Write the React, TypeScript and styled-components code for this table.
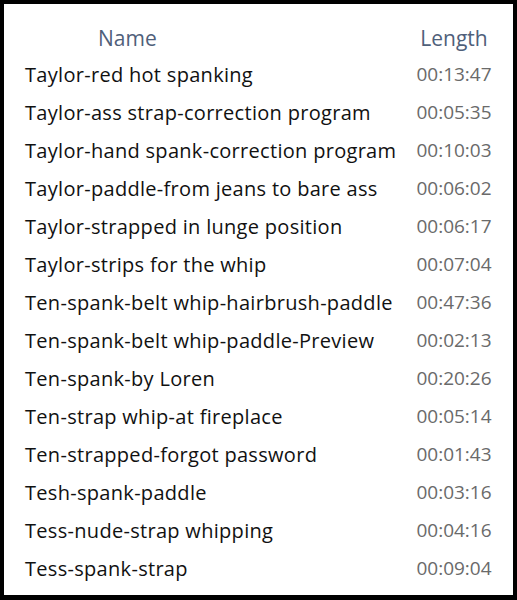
import React from "react";
import styled, { createGlobalStyle } from "styled-components";

const Global = createGlobalStyle`
  html, body { margin: 0; padding: 0; background: #fff; }
  * { box-sizing: border-box; }
`;

const Frame = styled.div`
  width: 517px;
  height: 600px;
  border: 4px solid #000;
  border-bottom-width: 5px;
  background: #fff;
  padding: 16px 19px 0 21px;
  font-family: "Open Sans", "Noto Sans", sans-serif;
`;

const Grid = styled.div`
  display: grid;
  grid-template-columns: 1fr 80px;
  grid-template-rows: 35px;
  grid-auto-rows: 38px;
  align-items: center;
`;

const Head = styled.div<{ $align: "name" | "len" }>`
  height: 35px;
  display: flex;
  align-items: center;
  justify-content: ${(p) => (p.$align === "name" ? "flex-start" : "center")};
  padding-left: ${(p) => (p.$align === "name" ? "73px" : "0")};
  color: #4f607a;
  font-size: 21px;
`;

const NameCell = styled.div`
  color: #111;
  font-size: 20px;
  letter-spacing: 0.3px;
  white-space: nowrap;
`;

const TimeCell = styled.div`
  color: #6a6a6a;
  font-size: 19px;
  text-align: center;
`;

const rows: [string, string][] = [
  ["Taylor-red hot spanking", "00:13:47"],
  ["Taylor-ass strap-correction program", "00:05:35"],
  ["Taylor-hand spank-correction program", "00:10:03"],
  ["Taylor-paddle-from jeans to bare ass", "00:06:02"],
  ["Taylor-strapped in lunge position", "00:06:17"],
  ["Taylor-strips for the whip", "00:07:04"],
  ["Ten-spank-belt whip-hairbrush-paddle", "00:47:36"],
  ["Ten-spank-belt whip-paddle-Preview", "00:02:13"],
  ["Ten-spank-by Loren", "00:20:26"],
  ["Ten-strap whip-at fireplace", "00:05:14"],
  ["Ten-strapped-forgot password", "00:01:43"],
  ["Tesh-spank-paddle", "00:03:16"],
  ["Tess-nude-strap whipping", "00:04:16"],
  ["Tess-spank-strap", "00:09:04"],
];

export default function App() {
  return (
    <>
      <Global />
      <Frame>
        <Grid>
          <Head $align="name">Name</Head>
          <Head $align="len">Length</Head>
          {rows.map(([n, t]) => (
            <React.Fragment key={n}>
              <NameCell>{n}</NameCell>
              <TimeCell>{t}</TimeCell>
            </React.Fragment>
          ))}
        </Grid>
      </Frame>
    </>
  );
}
